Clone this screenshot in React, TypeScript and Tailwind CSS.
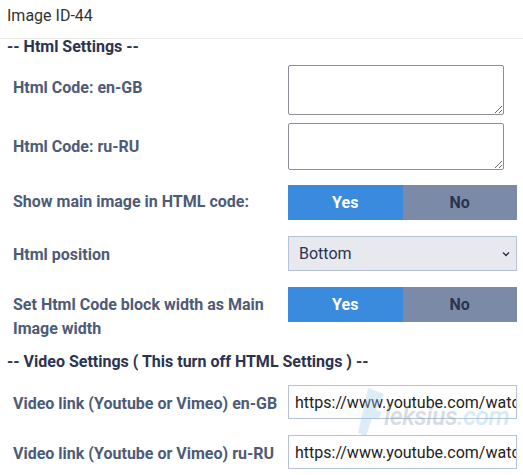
import React, { useState } from 'react';

const font = { fontFamily: 'Roboto, "Liberation Sans", sans-serif' };

interface RowProps {
  label: React.ReactNode;
  children: React.ReactNode;
  className?: string;
}

const Row: React.FC<RowProps> = ({ label, children, className = '' }) => (
  <div className={`flex ${className}`}>
    <div className="w-[288px] shrink-0 pl-[13px] pr-2 text-[16px] font-bold leading-[24px] text-[#4e5b78]">
      {label}
    </div>
    <div className="w-[229px] shrink-0">{children}</div>
  </div>
);

const YesNo: React.FC<{ value: boolean; onChange: (v: boolean) => void }> = ({ value, onChange }) => (
  <div className="flex h-[35px] w-[229px] text-[16px] font-bold">
    <button
      onClick={() => onChange(true)}
      className={`flex-1 ${value ? 'bg-[#3a8ade] text-white' : 'bg-[#7b8aa7] text-[#2b3350]'}`}
    >
      Yes
    </button>
    <button
      onClick={() => onChange(false)}
      className={`flex-1 ${!value ? 'bg-[#3a8ade] text-white' : 'bg-[#7b8aa7] text-[#2b3350]'}`}
    >
      No
    </button>
  </div>
);

export default function App() {
  const [showMain, setShowMain] = useState(true);
  const [blockWidth, setBlockWidth] = useState(true);

  return (
    <div className="relative w-[523px] h-[475px] overflow-hidden bg-white" style={font}>
      <div className="h-[39px] border-b border-[#e6e6e6] pl-[7px] pt-[6px] text-[16px] leading-[20px] text-[#333]">
        Image ID-44
      </div>

      <div className="pl-[7px] text-[16px] font-bold leading-[16px] text-[#2b3350]">-- Html Settings --</div>

      <Row label={<div className="pt-[11px]">Html Code: en-GB</div>} className="mt-[10px]">
        <textarea className="block h-[50px] w-[216px] rounded-[2px] border border-[#8e8d97] bg-white" />
      </Row>
      <Row label={<div className="pt-[12px]">Html Code: ru-RU</div>} className="mt-[8px]">
        <textarea className="block h-[47px] w-[216px] rounded-[2px] border border-[#8e8d97] bg-white" />
      </Row>

      <Row label={<div className="pt-[5px]">Show main image in HTML code:</div>} className="mt-[15px]">
        <YesNo value={showMain} onChange={setShowMain} />
      </Row>

      <Row label={<div className="pt-[7px]">Html position</div>} className="mt-[16px]">
        <div className="relative">
          <select
            defaultValue="bottom"
            className="block h-[35px] w-[229px] appearance-none border border-[#b6c2d6] bg-[#e8e9ee] pl-[10px] text-[16px] text-[#2b3350]"
          >
            <option value="top">Top</option>
            <option value="bottom">Bottom</option>
          </select>
          <svg
            className="pointer-events-none absolute right-[7px] top-[15px]"
            width="8"
            height="6"
            viewBox="0 0 8 6"
            fill="none"
            stroke="#2b3350"
            strokeWidth="1.4"
          >
            <path d="M1 1.5l3 3 3-3" />
          </svg>
        </div>
      </Row>

      <Row
        label={<div className="pt-[6px]">Set Html Code block width as Main Image width</div>}
        className="mt-[16px]"
      >
        <YesNo value={blockWidth} onChange={setBlockWidth} />
      </Row>

      <div className="mt-[9px] pl-[7px] text-[16px] font-bold leading-[24px] text-[#2b3350]">
        -- Video Settings ( This turn off HTML Settings ) --
      </div>

      <Row label={<div className="pt-[7px]">Video link (Youtube or Vimeo) en-GB</div>} className="mt-[11px]">
        <input
          defaultValue="https://www.youtube.com/watch?v=example"
          className="block h-[34px] w-[229px] border border-[#b6c2d6] bg-white pl-[6px] text-[16px] text-[#222]"
        />
      </Row>
      <Row label={<div className="pt-[7px]">Video link (Youtube or Vimeo) ru-RU</div>} className="mt-[16px]">
        <input
          defaultValue="https://www.youtube.com/watch?v=example"
          className="block h-[34px] w-[229px] border border-[#b6c2d6] bg-white pl-[6px] text-[16px] text-[#222]"
        />
      </Row>

      {/* faint site mark over the video fields */}
      <div className="pointer-events-none absolute left-[358px] top-[388px] flex items-end opacity-35">
        <svg width="26" height="48" viewBox="0 0 26 48">
          <path d="M10 0l16 6-8 16 6 2-4 8-6-2-6 18-8-3z" fill="#9ccbef" />
        </svg>
        <span className="mb-[6px] text-[25px] font-medium italic leading-[26px] tracking-[-0.5px]">
          <span className="text-[#8e9bb0]">leksius</span>
          <span className="text-[#8cc4ee]">.com</span>
        </span>
      </div>
    </div>
  );
}
